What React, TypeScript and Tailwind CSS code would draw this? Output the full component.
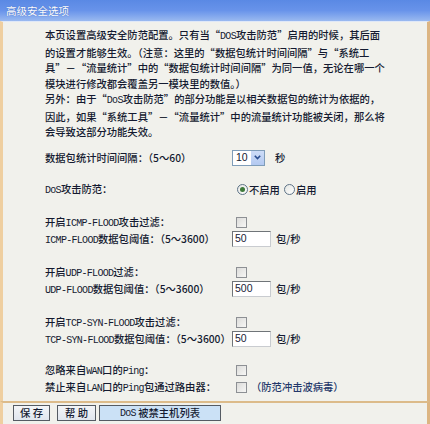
import React from "react";

function T({ s }: { s: string }) {
  const parts = s.split(/([A-Za-z][A-Za-z\-]*)/);
  return (
    <>
      {parts.map((p, i) =>
        /^[A-Za-z]/.test(p) ? (
          <span
            key={i}
            className="font-['Liberation_Mono',monospace] text-[10px] tracking-[-0.7px]"
          >
            {p}
          </span>
        ) : (
          <React.Fragment key={i}>{p}</React.Fragment>
        )
      )}
    </>
  );
}

function Check() {
  return (
    <div className="w-[11px] h-[11px] border border-[#8d9094] bg-gradient-to-br from-[#dcdcda] to-[#f7f7f5]" />
  );
}

function Box({ v }: { v: string }) {
  return (
    <div className="w-[39px] h-[16px] border border-[#6f7478] border-r-[#c9ccd0] border-b-[#c9ccd0] bg-white flex items-center pl-[2px] font-['Liberation_Sans',sans-serif] text-[10.5px] text-[#1a2136]">
      {v}
    </div>
  );
}

function Radio({ on }: { on?: boolean }) {
  return (
    <div className="w-[11px] h-[11px] rounded-full border border-[#5e7387] bg-gradient-to-br from-[#e4e6e2] to-[#ffffff] flex items-center justify-center">
      {on && <div className="w-[5px] h-[5px] rounded-full bg-[#3e7a3a]" />}
    </div>
  );
}

function Row({
  label,
  children,
  cls,
}: {
  label: string;
  children?: React.ReactNode;
  cls: string;
}) {
  return (
    <div className={"flex items-center " + cls}>
      <div className="w-[187px] shrink-0 whitespace-nowrap">
        <T s={label} />
      </div>
      <div className="flex items-center">{children}</div>
    </div>
  );
}

export default function App() {
  const lines = [
    "本页设置高级安全防范配置。只有当“DOS攻击防范”启用的时候，其后面",
    "的设置才能够生效。（注意：这里的“数据包统计时间间隔”与“系统工",
    "具”－“流量统计”中的“数据包统计时间间隔”为同一值，无论在哪一个",
    "模块进行修改都会覆盖另一模块里的数值。）",
    "另外：由于“DoS攻击防范”的部分功能是以相关数据包的统计为依据的，",
    "因此，如果“系统工具”－“流量统计”中的流量统计功能被关闭，那么将",
    "会导致这部分功能失效。",
  ];
  return (
    <div className="w-[430px] h-[424px] flex flex-col font-['Noto_Sans_CJK_SC',sans-serif] font-medium text-[10.3px] text-[#141a30] bg-[#f1f1ec] overflow-hidden">
      <div className="h-[21px] shrink-0 bg-gradient-to-b from-[#5a89e4] via-[#6893ea] to-[#9ab9f0] flex items-center pl-[6px] text-white text-[10.5px] font-normal [text-shadow:0_0_1px_#3a5fb0]">
        高级安全选项
      </div>
      <div className="flex-1 flex flex-col border-l-[3px] border-l-[#efcfa0] border-r-[3px] border-r-[#dcb583] border-t border-t-[#dfe8f8] pl-[42px] pt-[5px]">
        <div className="leading-[15.5px] whitespace-nowrap">
          {lines.map((l, i) => (
            <div key={i}>
              <T s={l} />
            </div>
          ))}
        </div>
        <Row label="数据包统计时间间隔：（5～60）" cls="mt-[9px] h-[18px]">
          <div className="w-[33px] h-[16px] border border-[#7f9db9] bg-white flex items-center">
            <div className="flex-1 pl-[3px] font-['Liberation_Sans',sans-serif] text-[10.5px]">10</div>
            <div className="w-[13px] h-[14px] bg-gradient-to-b from-[#cddcf7] to-[#b3c9f1] flex items-center justify-center">
              <svg width="7" height="5" viewBox="0 0 7 5">
                <path d="M0.8 0.8 L3.5 3.6 L6.2 0.8" fill="none" stroke="#2a4d8f" strokeWidth="1.6" />
              </svg>
            </div>
          </div>
          <span className="ml-[10px]">秒</span>
        </Row>
        <Row label="DoS攻击防范：" cls="mt-[14px] h-[18px]">
          <div className="ml-[5px]"><Radio on /></div>
          <span className="ml-[1px]">不启用</span>
          <div className="ml-[4px]"><Radio /></div>
          <span className="ml-[1px]">启用</span>
        </Row>
        <Row label="开启ICMP-FLOOD攻击过滤：" cls="mt-[15px] h-[17px]">
          <div className="ml-[4px]"><Check /></div>
        </Row>
        <Row label="ICMP-FLOOD数据包阈值：（5～3600）" cls="h-[17px]">
          <Box v="50" />
          <span className="ml-[5px]">包/秒</span>
        </Row>
        <Row label="开启UDP-FLOOD过滤：" cls="mt-[16px] h-[17px]">
          <div className="ml-[4px]"><Check /></div>
        </Row>
        <Row label="UDP-FLOOD数据包阈值：（5～3600）" cls="h-[17px]">
          <Box v="500" />
          <span className="ml-[5px]">包/秒</span>
        </Row>
        <Row label="开启TCP-SYN-FLOOD攻击过滤：" cls="mt-[16px] h-[17px]">
          <div className="ml-[4px]"><Check /></div>
        </Row>
        <Row label="TCP-SYN-FLOOD数据包阈值：（5～3600）" cls="h-[17px]">
          <Box v="50" />
          <span className="ml-[5px]">包/秒</span>
        </Row>
        <Row label="忽略来自WAN口的Ping：" cls="mt-[14px] h-[17px]">
          <div className="ml-[4px]"><Check /></div>
        </Row>
        <Row label="禁止来自LAN口的Ping包通过路由器：" cls="h-[17px]">
          <div className="ml-[4px]"><Check /></div>
          <span className="ml-[4px] text-[#24386a]">（防范冲击波病毒）</span>
        </Row>
      </div>
      <div className="h-[23px] shrink-0 border-t-2 border-t-[#dcbb8a] border-l-[3px] border-l-[#efcfa0] border-r-[3px] border-r-[#dcb583] flex items-start pt-[2px] pl-[10px] gap-[7px]">
        <div className="w-[37px] h-[16px] border border-[#555b63] bg-gradient-to-b from-[#f3f5f8] to-[#e0e6ee] flex items-center justify-center">
          保&nbsp;存
        </div>
        <div className="w-[39px] h-[16px] border border-[#555b63] bg-gradient-to-b from-[#f3f5f8] to-[#e0e6ee] flex items-center justify-center">
          帮&nbsp;助
        </div>
        <div className="-ml-[4px] w-[122px] h-[16px] border border-[#555b63] bg-[#cbe1f6] flex items-center justify-center">
          <T s="DoS" />
          &nbsp;被禁主机列表
        </div>
      </div>
    </div>
  );
}
